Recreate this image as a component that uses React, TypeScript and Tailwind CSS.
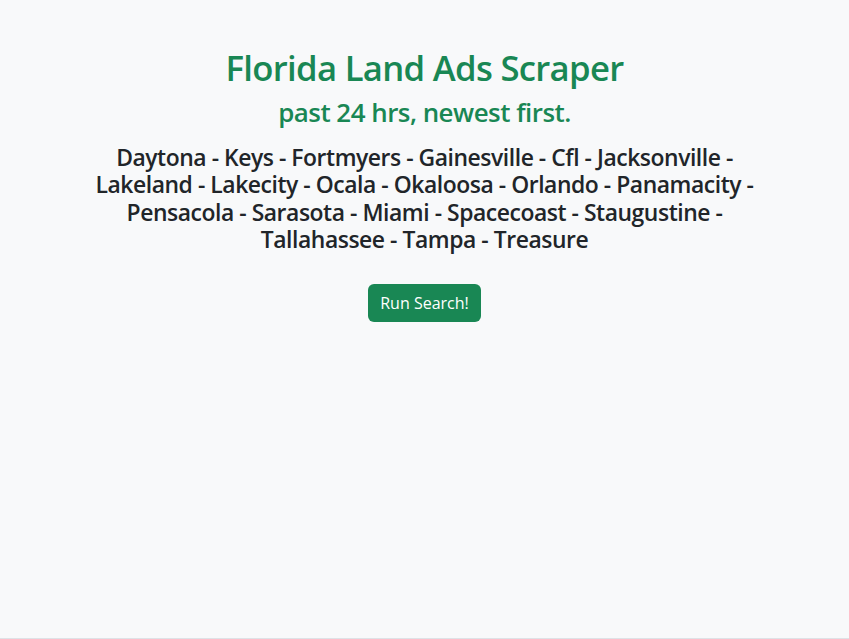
const cities = [
  "Daytona",
  "Keys",
  "Fortmyers",
  "Gainesville",
  "Cfl",
  "Jacksonville",
  "Lakeland",
  "Lakecity",
  "Ocala",
  "Okaloosa",
  "Orlando",
  "Panamacity",
  "Pensacola",
  "Sarasota",
  "Miami",
  "Spacecoast",
  "Staugustine",
  "Tallahassee",
  "Tampa",
  "Treasure",
];

export default function App() {
  return (
    <div className="min-h-[639px] bg-[#f8f9fa] border-b border-[#dee2e6] font-['Open_Sans',sans-serif] text-[#212529]">
      <div className="mx-auto w-[720px] px-3 pt-[47px] text-center">
        <h1 className="mb-2 text-[34.7px] font-semibold leading-[1.2] tracking-[-0.7px] text-[#198754]">
          Florida Land Ads Scraper
        </h1>
        <h3 className="mb-4 text-[25.9px] font-semibold leading-[1.2] tracking-[-0.5px] text-[#198754]">
          past 24 hrs, newest first.
        </h3>
        <h4 className="mb-2 text-[22.9px] font-semibold leading-[1.2] tracking-[-0.45px]">
          {cities.join(" - ")}
        </h4>
        <div className="mt-[30px]">
          <button className="h-[38px] rounded-md bg-[#198754] px-3 text-base leading-6 text-white">
            Run Search!
          </button>
        </div>
      </div>
    </div>
  );
}
